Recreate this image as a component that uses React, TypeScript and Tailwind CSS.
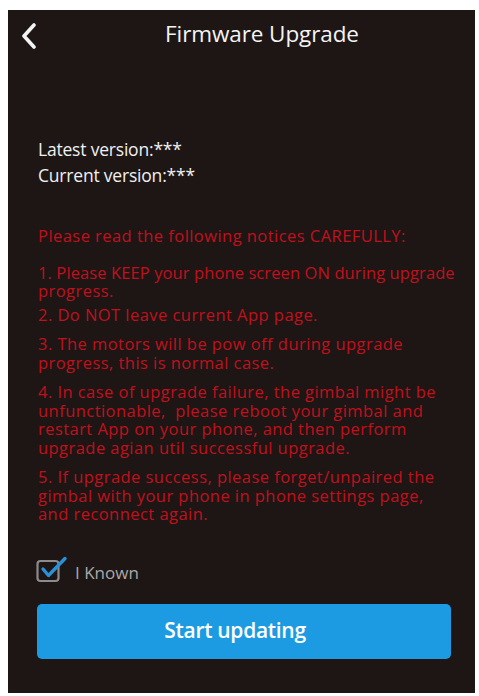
import React from "react";

const notices: { lines: string[]; mb: string }[] = [
    { lines: ["1. Please KEEP your phone screen ON during upgrade", "progress."], mb: "mb-[5px]" },
    { lines: ["2. Do NOT leave current App page."], mb: "mb-[11px]" },
    { lines: ["3. The motors will be pow off during upgrade", "progress, this is normal case."], mb: "mb-[11px]" },
    {
        lines: [
            "4. In case of upgrade failure, the gimbal might be",
            "unfunctionable,\u00a0 please reboot your gimbal and",
            "restart App on your phone, and then perform",
            "upgrade agian util successful upgrade.",
        ],
        mb: "mb-[11px]",
    },
    {
        lines: [
            "5. If upgrade success, please forget/unpaired the",
            "gimbal with your phone in phone settings page,",
            "and reconnect again.",
        ],
        mb: "mb-0",
    },
];

export default function App() {
    return (
        <div className="w-[479px] h-[696px] bg-white pl-[8px] pr-[4px] pt-[10px] pb-[3px] font-['Open_Sans',sans-serif]">
            <div className="h-full bg-[#1d1615] flex flex-col">
                {/* Header */}
                <div className="flex items-center pt-[9px] h-[39px]">
                    <div className="w-[41px] pl-[14px] flex items-center">
                        <svg width="14" height="26" viewBox="0 0 14 26" className="mt-[4px]">
                            <polyline
                                points="12,2 2,13 12,24"
                                fill="none"
                                stroke="#f4f4f4"
                                strokeWidth="3.6"
                                strokeLinecap="round"
                                strokeLinejoin="round"
                            />
                        </svg>
                    </div>
                    <h1 className="flex-1 text-center text-[22.5px] leading-[30px] text-[#f4f4f4] tracking-[-0.1px]">
                        Firmware Upgrade
                    </h1>
                </div>

                {/* Versions */}
                <div className="mt-[87px] pl-[30px] text-[17.5px] leading-[26px] text-[#f0f0f0] tracking-[-0.2px]">
                    <p>Latest version:***</p>
                    <p>Current version:***</p>
                </div>

                {/* Notices */}
                <div className="mt-[39px] pl-[30px] text-[16.5px] leading-[18.5px] text-[#c0111d] tracking-[0.45px] whitespace-nowrap">
                    <p className="mb-[18px]">Please read the following notices CAREFULLY:</p>
                    {notices.map((n, i) => (
                        <p key={i} className={n.mb}>
                            {n.lines.map((l, j) => (
                                <React.Fragment key={j}>
                                    {i === 0 && j === 0 ? <span className="tracking-[0.1px]">{l}</span> : l}
                                    {j < n.lines.length - 1 && <br />}
                                </React.Fragment>
                            ))}
                        </p>
                    ))}
                </div>

                {/* Checkbox */}
                <label className="mt-[31px] ml-[28px] flex items-center gap-[7px]">
                    <svg width="32" height="28" viewBox="0 0 32 28">
                        <rect x="1.5" y="5" width="21" height="20" rx="3" fill="none" stroke="#8c8c8c" strokeWidth="2.2" />
                        <polyline
                            points="7,13 12.5,19.5 29,2.5"
                            fill="none"
                            stroke="#2a90d8"
                            strokeWidth="3.4"
                            strokeLinecap="round"
                            strokeLinejoin="round"
                        />
                    </svg>
                    <span className="text-[17px] leading-[24px] text-[#a8a8a8] mt-[6px]">I Known</span>
                </label>

                {/* Button */}
                <div className="mt-[19px] ml-[29px] mr-[24px]">
                    <button className="w-full h-[55px] rounded-[5px] bg-[#1c9be2] text-white text-[21px] font-semibold tracking-[-0.3px] pr-[18px]">
                        Start updating
                    </button>
                </div>
            </div>
        </div>
    );
}
